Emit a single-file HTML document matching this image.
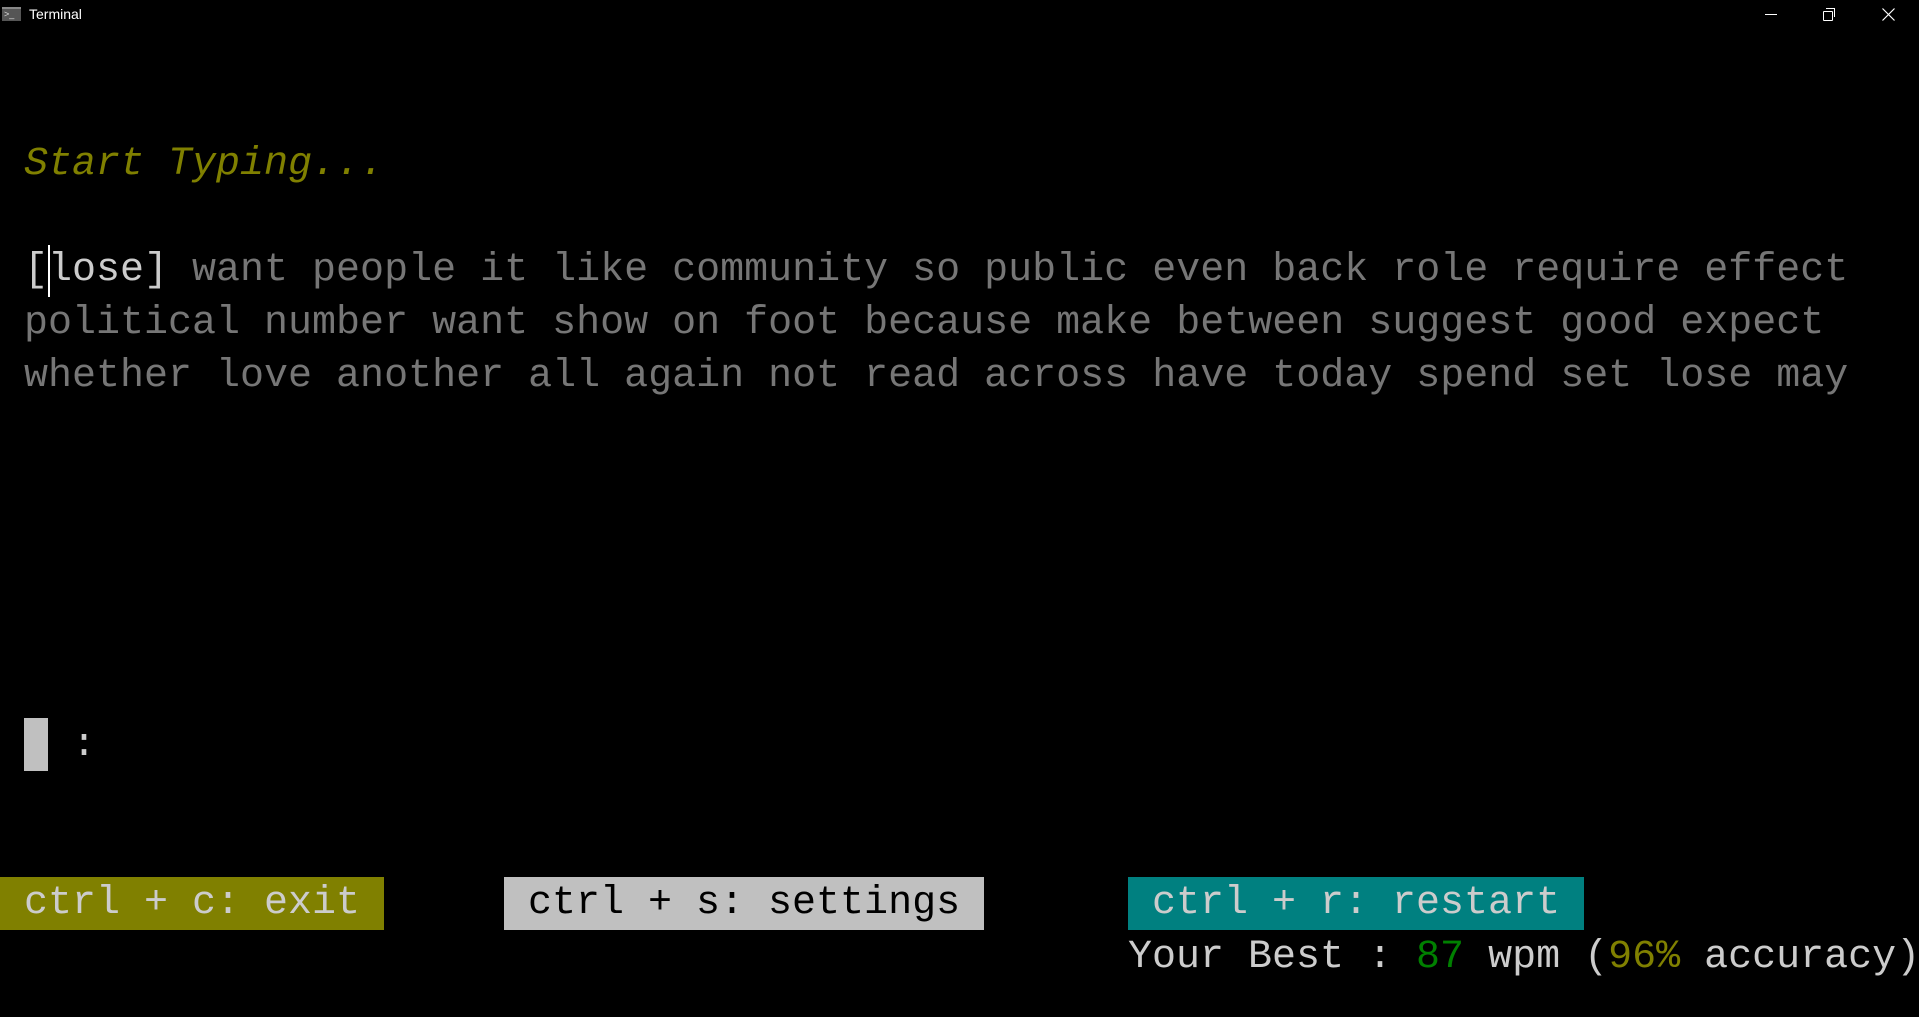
<!DOCTYPE html>
<html><head><meta charset="utf-8"><style>
html,body{margin:0;padding:0;background:#000;width:1919px;height:1017px;overflow:hidden;position:relative}
.l{position:absolute;left:0;height:53px;line-height:53px;font-family:"Liberation Mono",monospace;font-size:40px;white-space:pre;color:#cccccc}
.g{color:#767676}
.y{color:#808000}
.tb{position:absolute;top:0;left:0;width:1919px;height:30px;font-family:"Liberation Sans",sans-serif;font-size:14px;color:#fff}
</style></head><body>
<div class="tb">
<div style="position:absolute;left:2px;top:7px;width:19px;height:14px;background:#555;border-top:2px solid #888;box-sizing:border-box"><span style="position:absolute;left:2px;top:0;color:#ddd;font-size:9px;line-height:10px">&gt;_</span></div>
<span style="position:absolute;left:29px;top:6px">Terminal</span>
<div style="position:absolute;left:1765px;top:14px;width:12px;height:1px;background:#fff"></div>
<div style="position:absolute;left:1823px;top:11px;width:8px;height:8px;border:1px solid #fff;border-radius:1px"></div>
<div style="position:absolute;left:1826px;top:8px;width:8px;height:8px;border-top:1px solid #fff;border-right:1px solid #fff"></div>
<svg style="position:absolute;left:1882px;top:8px" width="13" height="13"><path d="M0.5 0.5L12.5 12.5M12.5 0.5L0.5 12.5" stroke="#fff" stroke-width="1.2"/></svg>
</div>
<div class="l y" style="top:138px;font-style:italic"> Start Typing...</div>
<div class="l" style="top:244px"> [lose] <span class="g">want people it like community so public even back role require effect</span></div>
<div style="position:absolute;left:48px;top:245px;width:2px;height:52px;background:#fff"></div>
<div class="l g" style="top:297px"> political number want show on foot because make between suggest good expect</div>
<div class="l g" style="top:350px"> whether love another all again not read across have today spend set lose may</div>
<div style="position:absolute;left:24px;top:718px;width:24px;height:53px;background:#c0c0c0"></div>
<div class="l" style="top:719px">   :</div>
<div class="l" style="top:877px;left:0;background:#808000;color:#cccccc"> ctrl + c: exit </div>
<div class="l" style="top:877px;left:504px;background:#c0c0c0;color:#000"> ctrl + s: settings </div>
<div class="l" style="top:877px;left:1128px;background:#008080;color:#cccccc"> ctrl + r: restart </div>
<div class="l" style="top:931px;left:1128px">Your Best : <span style="color:#008000">87</span> wpm (<span class="y">96%</span> accuracy)</div>
</body></html>
